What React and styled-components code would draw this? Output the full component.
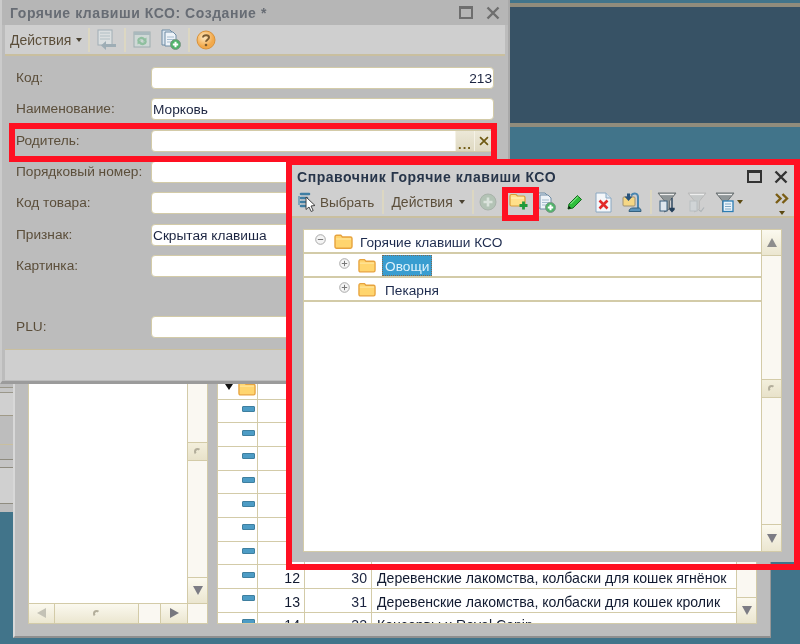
import React from 'react';
import styled, { createGlobalStyle, css } from 'styled-components';

const Global = createGlobalStyle`
  html, body { margin: 0; padding: 0; background: #41748a; }
  body { font-family: "Liberation Sans", Arial, sans-serif; font-size: 13.7px; overflow: hidden; }
`;

const Desktop = styled.div`
  position: relative; width: 800px; height: 644px; overflow: hidden; background: #41748a;
  display: flex; flex-direction: column; filter: blur(0.45px);
`;
const Band = styled.div`
  height: ${p => p.$h}px; flex: none; background: ${p => p.$c};
`;
const Win = styled.div`
  position: absolute; left: ${p => p.$x}px; top: ${p => p.$y}px; width: ${p => p.$w}px; height: ${p => p.$h}px;
  box-sizing: border-box; display: flex; flex-direction: column; background: #bdbdbd; overflow: hidden;
`;
const FormWin = styled(Win)`
  border-left: 2px solid #cbcbcb; border-right: 2px solid #a9a9a9; border-bottom: 3px solid #9b9b9b; padding: 0 3px 1px 3px;
  background: #bcbcbc;
`;
const TitleBar = styled.div`
  flex: none; height: 25px; display: flex; align-items: center; margin: 0 -3px; padding: 0 8px 0 8px;
  background: #b6b6b6;
`;
const DirTitleBar = styled(TitleBar)`
  height: 23px; margin: 0; padding-left: 6px; background: #cfcfcf;
`;
const TitleText = styled.div`
  flex: 1; font-weight: 700; font-size: 14px; letter-spacing: 0.55px; white-space: nowrap;
  color: ${p => p.$active ? '#27354a' : '#676c74'};
`;
const WinBtns = styled.div`
  display: flex; align-items: center; gap: ${p => p.$gap}px;
`;
const MaxBox = styled.div`
  width: ${p => p.$w}px; height: 13px; box-sizing: border-box; border: 2px solid ${p => p.$c}; border-top-width: 3px;
`;
const Toolbar = styled.div`
  flex: none; height: ${p => p.$h}px; display: flex; align-items: center; box-sizing: border-box;
  background: #cfcfcf; border-bottom: 2px solid #c9bf9f; color: #5b4e3a;
  padding: 0 0 0 ${p => p.$pad}px;
`;
const ToolText = styled.span`
  font-size: ${p => p.$fs || 14}px; white-space: nowrap; margin-left: ${p => p.$ml || 0}px;
`;
const Caret = styled.span`
  width: 0; height: 0; border: 3.5px solid transparent; border-top: 4px solid ${p => p.$c}; border-bottom: 0;
  margin-left: ${p => p.$ml}px; display: inline-block; flex: none;
`;
const Sep = styled.div`
  width: 2px; height: 24px; background: #dcd7c2; margin-left: ${p => p.$ml}px; flex: none;
`;
const Slot = styled.div`
  flex: none; display: flex; align-items: center; justify-content: center;
  width: ${p => p.$w}px; margin-left: ${p => p.$ml}px;
`;
const FormBody = styled.div`
  flex: 1; display: flex; flex-direction: column; gap: 9.33px; padding: 11px 11px 0 11px;
`;
const Row = styled.div`
  display: flex; align-items: flex-start; height: 22px; flex: none; margin-bottom: ${p => p.$after || 0}px;
`;
const Label = styled.div`
  width: 135px; flex: none; color: #5b4e3a; line-height: 22px; white-space: nowrap;
`;
const Field = styled.div`
  flex: 1; height: 22px; box-sizing: border-box; background: #fff; border: 1.5px solid #d3cba8; border-radius: 4px;
  display: flex; align-items: center; padding: 1px 1px 0; color: #1b2440; overflow: hidden;
  justify-content: ${p => p.$right ? 'flex-end' : 'flex-start'};
`;
const FieldBtn = styled.div`
  flex: none; width: ${p => p.$w}px; height: 20px; background: linear-gradient(#ece8d8, #dfd9c2);
  border-left: 1px solid #f5f2e6; color: #6f5a12; font-weight: 700; display: flex; align-items: center; justify-content: center;
  font-size: 13px; line-height: 1;
`;
const Dots = styled.span`
  letter-spacing: 1px; margin-top: 7px;
`;
const PickField = styled(Field)`
  padding: 0; justify-content: flex-end;
`;
const Footer = styled.div`
  flex: none; height: 31px; background: #cfcfcf; border-top: 1.5px solid #c9bf9f; box-sizing: border-box;
`;

const DirBody = styled.div`
  flex: 1; display: flex; min-height: 0; padding: 11px 14px 10px 12px;
`;
const TreeBox = styled.div`
  flex: 1; display: flex; border: 1.5px solid #d3cba8; background: #fff; min-width: 0;
`;
const Tree = styled.div`
  flex: 1; display: flex; flex-direction: column;
`;
const TreeRow = styled.div`
  height: 24px; box-sizing: border-box; border-bottom: 2px solid #d3cba8; display: flex; align-items: center;
  padding-left: ${p => p.$pad}px; color: #1d2b4e; flex: none;
`;
const ExpanderWrap = styled.span`
  display: flex; margin: -4px 8px 0 0; width: 11px; flex: none;
`;
const TreeLabel = styled.span`
  margin-left: ${p => p.$ml}px; padding: 1px ${p => p.$sel ? 3 : 0}px 0; height: 21px; line-height: 21px; box-sizing: border-box;
  ${p => p.$sel && css`background: #399dd0; color: #dff2fb; outline: 1px dotted #7d6a50; outline-offset: -1px;`}
`;
const Scroll = styled.div`
  flex: none; width: ${p => p.$w}px; display: flex; flex-direction: column; background: #faf8f2;
  border-left: 1.5px solid #d3cba8; box-sizing: border-box;
`;
const ScrollBtn = styled.div`
  flex: none; height: ${p => p.$h}px; display: flex; align-items: center; justify-content: center; box-sizing: border-box;
  background: linear-gradient(#fbf9ef, #ebe6d0); border-top: ${p => p.$top ? '1.5px solid #d3cba8' : '0'};
  border-bottom: ${p => p.$bottom ? '1.5px solid #d3cba8' : '0'};
`;
const Track = styled.div`
  ${p => p.$h ? css`height: ${p.$h}px; flex: none;` : css`flex: 1;`}
`;
const Grip = styled.div`
  width: 7px; height: 7px; border-radius: 50%; border: 2px solid #b3ae9b; border-right-color: transparent; border-bottom-color: transparent; box-sizing: border-box;
`;
const Thumb = styled(ScrollBtn)`
  background: linear-gradient(#f3efdc, #e8e2ca);
  border-top: 1.5px solid #d3cba8; border-bottom: 1.5px solid #d3cba8;
`;
const ArrowV = styled.div`
  width: 0; height: 0; border-left: 5px solid transparent; border-right: 5px solid transparent;
  ${p => p.$up ? css`border-bottom: 9px solid #8d8d8d;` : css`border-top: 9px solid #7c7c84;`}
`;
const ArrowH = styled.div`
  width: 0; height: 0; border-top: 5px solid transparent; border-bottom: 5px solid transparent;
  ${p => p.$left ? css`border-right: 9px solid #c4c2b6;` : css`border-left: 9px solid #77777e;`}
`;

const BackBody = styled.div`
  flex: 1; display: flex; gap: 9px; padding: 5px 13px 12px 13px; min-height: 0;
`;
const BackWin = styled(Win)`
  border-left: 2px solid #d8d8d8; border-right: 1px solid #979797; border-bottom: 2px solid #8f8f8f;
`;
const LeftPanel = styled.div`
  flex: none; width: 180px; display: grid; grid-template-columns: 1fr 20px; grid-template-rows: 1fr 20px;
  border: 1.5px solid #d3cba8; background: #fff; box-sizing: border-box;
`;
const HScroll = styled.div`
  display: flex; background: #faf8f2; border-top: 1.5px solid #d3cba8;
`;
const HBtn = styled.div`
  flex: none; width: ${p => p.$w}px; display: flex; align-items: center; justify-content: center; box-sizing: border-box;
  background: linear-gradient(#fbf9ef, #ebe6d0); border-right: ${p => p.$end ? '0' : '1.5px solid #d3cba8'};
`;
const HGap = styled.div` flex: 1; border-right: 1.5px solid #d3cba8; `;
const Corner = styled.div` background: #faf8f2; border-top: 1.5px solid #d3cba8; border-left: 1.5px solid #d3cba8; `;
const TableBox = styled.div`
  flex: 1; display: flex; min-width: 0; border: 1.5px solid #d3cba8; background: #fff; overflow: hidden; box-sizing: border-box;
`;
const Rows = styled.div`
  flex: 1; display: flex; flex-direction: column; overflow: hidden; min-width: 0;
`;
const TRow = styled.div`
  flex: none; height: 23.67px; box-sizing: border-box; display: grid; grid-template-columns: 40px 47px 67px 1fr;
  border-bottom: 1.5px solid #d3cba8;
`;
const Cell = styled.div`
  box-sizing: border-box; border-right: ${p => p.$last ? 0 : '1.5px solid #d3cba8'}; display: flex; align-items: center;
  justify-content: ${p => p.$right ? 'flex-end' : 'flex-start'}; padding: 3px ${p => p.$right ? 4 : 5}px 0; font-size: 14.1px; white-space: nowrap;
  color: ${p => p.$c || '#111a30'}; overflow: hidden;
`;
const MarkCell = styled(Cell)`
  padding: 0 1px 0 0; justify-content: flex-end;
`;
const RowMark = styled.div`
  width: 11px; height: 4px; background: #4d9cc5; border: 1px solid #3f7f9f; border-radius: 1px; margin: -4px 1px 0 0;
`;
const GroupCaret = styled.span`
  width: 0; height: 0; border: 4px solid transparent; border-top: 6px solid #111; border-bottom: 0; margin: 0 5px 0 0; flex: none;
`;
const GroupFolder = styled.span`
  display: flex; margin-top: 3px;
`;
const Strip = styled.div`
  position: absolute; left: 0; top: 384px; width: 13px; height: 128px; display: flex; flex-direction: column; background: #bdbdbd;
`;
const Stripe = styled.div`
  flex: none; height: ${p => p.$h}px; background: ${p => p.$c};
`;
const Highlight = styled.div`
  position: absolute; left: ${p => p.$x}px; top: ${p => p.$y}px; width: ${p => p.$w}px; height: ${p => p.$h}px;
  border: ${p => p.$b}px solid #ff1022; box-sizing: border-box; pointer-events: none;
`;

const CloseX = ({ c, s = 14 }) => (
  <svg width={s} height={s} viewBox="0 0 14 14"><path d="M1.5 1.5 12.5 12.5M12.5 1.5 1.5 12.5" stroke={c} strokeWidth="2.4" /></svg>
);
const Folder = ({ w = 19, h = 15 }) => (
  <svg width={w} height={h} viewBox="0 0 19 15">
    <path d="M1 3c0-1 .6-1.7 1.6-1.7h4.2L8.4 3H16.4c1 0 1.600.7 1.600 1.600v8c0 1-.6 1.600-1.600 1.600H2.600c-1 0-1.600-.6-1.600-1.600z" fill="#ffd56e" stroke="#e7a33e" strokeWidth="1.4" />
    <path d="M2 5h15" stroke="#ffe9a8" strokeWidth="1" />
  </svg>
);
const Expander = ({ open }) => (
  <svg width="11" height="11" viewBox="0 0 11 11">
    <circle cx="5.5" cy="5.5" r="4.8" fill="#f4f4f4" stroke="#a9a9a9" />
    <path d={open ? 'M2.8 5.5h5.4' : 'M2.8 5.5h5.4M5.5 2.8v5.4'} stroke="#777" strokeWidth="1" />
  </svg>
);
const DocBack = () => (
  <svg width="21" height="21" viewBox="0 0 21 21" opacity="0.75">
    <rect x="2" y="1" width="14" height="15" fill="#dfe5e6" stroke="#92a4ad" />
    <path d="M4 4h10M4 7h10M4 10h10" stroke="#a9bac2" />
    <path d="M20 15H10v-3l-5 4.5 5 4.5v-3h10z" fill="#8ea2ad" />
  </svg>
);
const WinSync = () => (
  <svg width="18" height="17" viewBox="0 0 18 17">
    <rect x="1" y="1" width="16" height="15" fill="#cfd8d6" stroke="#9dadb0" />
    <rect x="1" y="1" width="16" height="3" fill="#a9b9bd" />
    <path d="M4 9.5a4.500 4.500 0 0 1 8-2l1.500-1v4h-4l1.200-1a3 3 0 0 0-4.700 0zM14 10.500a4.500 4.500 0 0 1-8 2L4.500 13.500v-4h4L7.300 10.500a3 3 0 0 0 4.700 0z" fill="#8fbf9f" />
  </svg>
);
const DocsPlus = () => (
  <svg width="20" height="21" viewBox="0 0 20 21">
    <path d="M1 1h8l2 2v13H1z" fill="#dbe5ee" stroke="#6f8ca5" />
    <path d="M4 3h8l3 3v11H4z" fill="#eef3f8" stroke="#6f8ca5" />
    <path d="M6 8h7M6 10.500h7M6 13h5" stroke="#a5bccf" />
    <circle cx="14.500" cy="15.500" r="5" fill="#4fb369" stroke="#7d9687" />
    <path d="M11.800 15.500h5.400M14.500 12.800v5.400" stroke="#fff" strokeWidth="2" />
  </svg>
);
const Help = () => (
  <svg width="20" height="20" viewBox="0 0 20 20">
    <defs><radialGradient id="hlp" cx="40%" cy="35%"><stop offset="0" stopColor="#ffe9c2" /><stop offset="1" stopColor="#f2a94b" /></radialGradient></defs>
    <circle cx="10" cy="10" r="9" fill="url(#hlp)" stroke="#d9923a" />
    <path d="M7 7.500c.3-3 6-3 6 0 0 2.200-3 2.200-3 4.300" fill="none" stroke="#7a5a30" strokeWidth="2" />
    <circle cx="10" cy="15" r="1.300" fill="#7a5a30" />
  </svg>
);
const SelectIcon = () => (
  <svg width="19" height="20" viewBox="0 0 19 20">
    <path d="M3 2h8M3 6h6M3 10h6M3 14h7" stroke="#3f7ea3" strokeWidth="2.600" strokeLinecap="round" fill="none" />
    <path d="M1 4v9" stroke="#5c93b3" strokeWidth="1.400" />
    <path d="M8 5l9 8.500-4 .5 2.200 4.500-2 1-2.200-4.500-3 2.500z" fill="#fff" stroke="#444" strokeWidth="1" />
  </svg>
);
const GrayPlus = () => (
  <svg width="18" height="18" viewBox="0 0 18 18">
    <circle cx="9" cy="9" r="8" fill="#b3c3b5" stroke="#a9b3aa" />
    <path d="M4.500 9h9M9 4.500v9" stroke="#dbe3dc" strokeWidth="2.600" />
  </svg>
);
const FolderPlus = () => (
  <svg width="20" height="18" viewBox="0 0 20 18">
    <path d="M1 3c0-1 .5-1.500 1.500-1.500h4.500L8.500 3h6c1 0 1.500.6 1.500 1.500V13H2.500C1.500 13 1 12.500 1 11.500z" fill="#ffe08a" stroke="#d99d3a" strokeWidth="1.200" />
    <path d="M2 5h13" stroke="#fff3c5" />
    <path d="M14.500 8.500v8M10.500 12.500h8" stroke="#1f9a3a" strokeWidth="2.800" />
  </svg>
);
const Pencil = () => (
  <svg width="16" height="16" viewBox="0 0 16 16">
    <path d="M1 15l1-5L10.500 1.500l4 4L6 14z" fill="#2fbf3c" stroke="#116a1c" strokeWidth="1" />
    <path d="M3.500 10L11 2.500" stroke="#a8f0a8" />
    <path d="M1 15l1-3 2 2z" fill="#111" />
  </svg>
);
const DeleteDoc = () => (
  <svg width="17" height="21" viewBox="0 0 17 21">
    <path d="M1 1h10l5 5v14H1z" fill="#f4f7fa" stroke="#8aa8c2" />
    <path d="M11 1v5h5" fill="#d5e2ee" stroke="#8aa8c2" />
    <path d="M4.500 8.500l8 8M12.500 8.500l-8 8" stroke="#e22a2a" strokeWidth="2.600" />
  </svg>
);
const Lamp = () => (
  <svg width="20" height="21" viewBox="0 0 20 21">
    <rect x="1" y="5" width="12" height="9" rx="1" fill="#f6d784" stroke="#9f9172" />
    <path d="M5 1.500h3v3h2.500L6.500 9 2.500 4.500H5z" fill="#27527a" />
    <path d="M9 3.500c3-3.500 7-2 7 1.500v11" fill="none" stroke="#4a86b0" strokeWidth="2" />
    <path d="M7 19.500c0-2.500 2-3.500 4-3.500h6c1 0 2 1 2 3.500z" fill="#5b93ba" stroke="#35617f" />
  </svg>
);
const Funnel = ({ kind }) => {
  const light = kind === 'off';
  const top = light ? '#c6c9c9' : '#8f9698';
  const line = light ? '#b9bfc2' : '#3b5f7d';
  return (
    <svg width="20" height="21" viewBox="0 0 20 21">
      <path d="M1 1h18l-6.500 8v8l-5 3V9z" fill={top} stroke={light ? '#bbb' : '#6c7274'} />
      <path d="M3 2.500h14" stroke="#eee" strokeWidth="1.200" />
      <rect x="3" y="9" width="7" height="10" fill={light ? '#d0d4d6' : '#dfe7ee'} stroke={line} opacity={kind === 'sel' ? 0 : 1} />
      {kind === 'pick' && <path d="M15 6v13M13 16.500h4v1l-2 2-2-2z" stroke="#25405a" strokeWidth="1.400" fill="#25405a" />}
      {kind === 'sel' && <><rect x="8" y="9" width="10" height="10.500" fill="#eaf3fa" stroke="#2b7db4" strokeWidth="1.300" /><path d="M10 12h6M10 14.500h6M10 17h6" stroke="#7fa8c4" /></>}
      {kind === 'off' && <path d="M12 18l2 1.500 3-4" stroke="#aeb4b7" strokeWidth="1.200" fill="none" />}
    </svg>
  );
};
const Chevrons = () => (
  <svg width="15" height="11" viewBox="0 0 15 11">
    <path d="M1 1l4.500 4.500L1 10M7.500 1 12 5.500 7.500 10" fill="none" stroke="#7a5d14" strokeWidth="2.400" />
  </svg>
);
const ChevronStack = styled.div`
  display: flex; flex-direction: column; align-items: center; gap: 7px; margin-left: 32px; width: 15px; margin-top: 4px;
`;

const FormField = ({ label, value, right, after, pick }) => (
  <Row $after={after}>
    <Label>{label}</Label>
    {pick ? (
      <PickField>
        <FieldBtn $w={18}><Dots>...</Dots></FieldBtn>
        <FieldBtn $w={18}><CloseX c="#6f5a12" s={10} /></FieldBtn>
      </PickField>
    ) : (
      <Field $right={right}>{value}</Field>
    )}
  </Row>
);

const tableRows = [
  ['', '', ''], ['', '', '', true], ['', '', ''], ['', '', ''], ['', '', ''], ['', '', ''], ['', '', ''], ['', '', ''], ['', '', ''],
  ['12', '30', 'Деревенские лакомства, колбаски для кошек ягнёнок'],
  ['13', '31', 'Деревенские лакомства, колбаски для кошек кролик'],
  ['14', '32', 'Консервы х Royal Canin'],
];

const ScrollBar = ({ w, before, btnBottom }) => (
  <Scroll $w={w}>
    <ScrollBtn $h={26} $bottom><ArrowV $up /></ScrollBtn>
    <Track $h={before} />
    <Thumb $h={19}><Grip /></Thumb>
    <Track />
    <ScrollBtn $h={btnBottom} $top><ArrowV /></ScrollBtn>
  </Scroll>
);

export default function App() {
  return (
    <Desktop>
      <Global />
      <Band $h={3} $c="#41748a" />
      <Band $h={3.5} $c="#908c7c" />
      <Band $h={116.5} $c="#375265" />
      <Band $h={3.5} $c="#908c7c" />

      <Strip>
        <Stripe $h={3} $c="#bdbdbd" /><Stripe $h={1} $c="#9a978a" /><Stripe $h={4} $c="#c6c6c6" /><Stripe $h={1} $c="#9a978a" />
        <Stripe $h={22} $c="#d0d0d0" /><Stripe $h={1} $c="#a09a88" /><Stripe $h={28} $c="#bdbdbd" /><Stripe $h={1} $c="#c9bf9f" />
        <Stripe $h={14} $c="#bdbdbd" /><Stripe $h={1} $c="#8f8c80" /><Stripe $h={7} $c="#c4c4c4" /><Stripe $h={1} $c="#8f8c80" />
        <Stripe $h={35} $c="#d0d0d0" /><Stripe $h={1} $c="#8f8c80" />
      </Strip>

      <BackWin $x={13} $y={346.33} $w={758} $h={291.67}>
        <BackBody>
          <LeftPanel>
            <div />
            <ScrollBar w={20} before={64} btnBottom={26} />
            <HScroll>
              <HBtn $w={26}><ArrowH $left /></HBtn>
              <HBtn $w={84}><Grip /></HBtn>
              <HGap />
              <HBtn $w={26} $end><ArrowH /></HBtn>
            </HScroll>
            <Corner />
          </LeftPanel>
          <TableBox>
            <Rows>
              {tableRows.map((r, i) => (
                <TRow key={i}>
                  <MarkCell>
                    {r[3] ? (
                      <>
                        <GroupCaret />
                        <GroupFolder><Folder w={18} h={15} /></GroupFolder>
                      </>
                    ) : <RowMark />}
                  </MarkCell>
                  <Cell $right>{r[0]}</Cell>
                  <Cell $right $c="#1b2440">{r[1]}</Cell>
                  <Cell $last>{r[2]}</Cell>
                </TRow>
              ))}
            </Rows>
            <ScrollBar w={20} before={60} btnBottom={26} />
          </TableBox>
        </BackBody>
      </BackWin>

      <FormWin $x={0} $y={0} $w={510} $h={384}>
        <TitleBar>
          <TitleText>Горячие клавиши КСО: Создание *</TitleText>
          <WinBtns $gap={13}><MaxBox $w={14} $c="#6e6e6e" /><CloseX c="#6e6e6e" /></WinBtns>
        </TitleBar>
        <Toolbar $h={31} $pad={5}>
          <ToolText>Действия</ToolText>
          <Caret $c="#4a4232" $ml={5} />
          <Sep $ml={6} />
          <Slot $w={21} $ml={6}><DocBack /></Slot>
          <Sep $ml={7} />
          <Slot $w={18} $ml={7}><WinSync /></Slot>
          <Slot $w={20} $ml={10}><DocsPlus /></Slot>
          <Sep $ml={7} />
          <Slot $w={20} $ml={6}><Help /></Slot>
        </Toolbar>
        <FormBody>
          <FormField label="Код:" value="213" right />
          <FormField label="Наименование:" value="Морковь" />
          <FormField label="Родитель:" pick />
          <FormField label="Порядковый номер:" />
          <FormField label="Код товара:" />
          <FormField label="Признак:" value="Скрытая клавиша" />
          <FormField label="Картинка:" after={29.67} />
          <FormField label="PLU:" />
        </FormBody>
        <Footer />
      </FormWin>

      <Win $x={291} $y={165} $w={505} $h={397}>
        <DirTitleBar>
          <TitleText $active>Справочник Горячие клавиши КСО</TitleText>
          <WinBtns $gap={12}><MaxBox $w={15} $c="#333" /><CloseX c="#333" /></WinBtns>
        </DirTitleBar>
        <Toolbar $h={30} $pad={7}>
          <SelectIcon />
          <ToolText $ml={3} $fs={13.5}>Выбрать</ToolText>
          <Sep $ml={8} />
          <ToolText $ml={7}>Действия</ToolText>
          <Caret $c="#4a4232" $ml={6} />
          <Sep $ml={7} />
          <Slot $w={18} $ml={5}><GrayPlus /></Slot>
          <Slot $w={20} $ml={12}><FolderPlus /></Slot>
          <Slot $w={20} $ml={7}><DocsPlus /></Slot>
          <Slot $w={16} $ml={11}><Pencil /></Slot>
          <Slot $w={17} $ml={12}><DeleteDoc /></Slot>
          <Slot $w={20} $ml={10}><Lamp /></Slot>
          <Sep $ml={8} />
          <Slot $w={20} $ml={5}><Funnel kind="pick" /></Slot>
          <Slot $w={20} $ml={10}><Funnel kind="off" /></Slot>
          <Slot $w={20} $ml={8}><Funnel kind="sel" /></Slot>
          <Caret $c="#5c4a12" $ml={2} />
          <ChevronStack><Chevrons /><Caret $c="#5c4a12" $ml={0} /></ChevronStack>
        </Toolbar>
        <DirBody>
          <TreeBox>
            <Tree>
              <TreeRow $pad={11}><ExpanderWrap><Expander open /></ExpanderWrap><Folder /><TreeLabel $ml={7}>Горячие клавиши КСО</TreeLabel></TreeRow>
              <TreeRow $pad={35}><ExpanderWrap><Expander /></ExpanderWrap><Folder w={18} /><TreeLabel $ml={6} $sel>Овощи</TreeLabel></TreeRow>
              <TreeRow $pad={35}><ExpanderWrap><Expander /></ExpanderWrap><Folder w={18} /><TreeLabel $ml={9}>Пекарня</TreeLabel></TreeRow>
            </Tree>
            <ScrollBar w={20} before={123} btnBottom={27} />
          </TreeBox>
        </DirBody>
      </Win>

      <Highlight $x={9} $y={123} $w={488} $h={39} $b={6} />
      <Highlight $x={286} $y={159} $w={514} $h={411} $b={6} />
      <Highlight $x={502} $y={187} $w={37} $h={34} $b={6} />
    </Desktop>
  );
}
